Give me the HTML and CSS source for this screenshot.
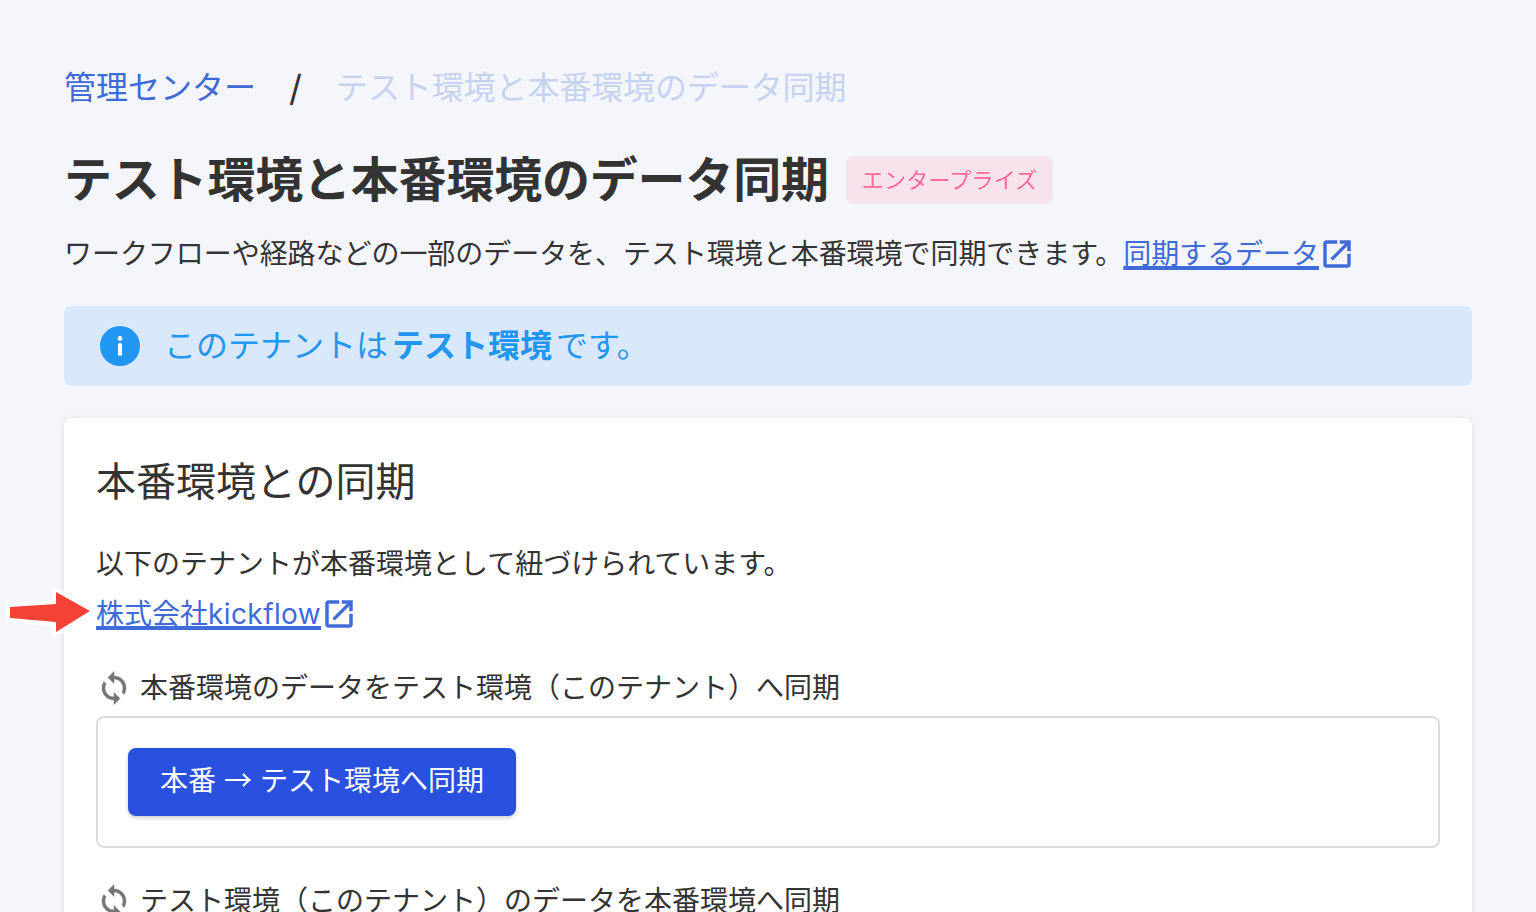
FILE: index.html
```html
<!DOCTYPE html>
<html lang="ja">

<head>
    <meta charset="UTF-8">
    <title>テスト環境と本番環境のデータ同期</title>
    <link rel="stylesheet" href="styles.css">
</head>

<body>
    <div class="container">
        <nav class="breadcrumb">
            <a href="#" class="crumb-link">管理センター</a>
            <span class="crumb-sep">/</span>
            <span class="crumb-current">テスト環境と本番環境のデータ同期</span>
        </nav>

        <div class="title-row">
            <h1>テスト環境と本番環境のデータ同期</h1>
            <span class="badge">エンタープライズ</span>
        </div>

        <p class="lead">ワークフローや経路などの一部のデータを、テスト環境と本番環境で同期できます。<a href="#" class="ext-link"><span class="ext-text">同期するデータ</span><svg class="ext-icon" viewBox="0 0 24 24"><path d="M19 19H5V5h7V3H5a2 2 0 0 0-2 2v14a2 2 0 0 0 2 2h14a2 2 0 0 0 2-2v-7h-2v7zM14 3v2h3.59l-9.83 9.83 1.41 1.41L19 6.41V10h2V3h-7z"/></svg></a></p>

        <div class="alert">
            <svg class="alert-icon" viewBox="0 0 40 40"><circle cx="20" cy="20" r="20" fill="#2196f3"/><circle cx="20" cy="12.5" r="2.4" fill="#fff"/><rect x="18" y="17" width="4" height="13" rx="2" fill="#fff"/></svg>
            <p>このテナントは <strong>テスト環境</strong> です。</p>
        </div>

        <section class="card">
            <h2>本番環境との同期</h2>
            <p class="card-text">以下のテナントが本番環境として紐づけられています。</p>
            <a href="#" class="ext-link tenant-link"><span class="ext-text">株式会社<span class="latin">kickflow</span></span><svg class="ext-icon" viewBox="0 0 24 24"><path d="M19 19H5V5h7V3H5a2 2 0 0 0-2 2v14a2 2 0 0 0 2 2h14a2 2 0 0 0 2-2v-7h-2v7zM14 3v2h3.59l-9.83 9.83 1.41 1.41L19 6.41V10h2V3h-7z"/></svg></a>

            <div class="sync-label">
                <svg class="sync-icon" viewBox="0 0 24 24"><path d="M12 4V1L8 5l4 4V6c3.31 0 6 2.69 6 6 0 1.01-.25 1.97-.7 2.8l1.46 1.46C19.54 15.03 20 13.57 20 12c0-4.42-3.58-8-8-8zm0 14c-3.31 0-6-2.69-6-6 0-1.01.25-1.97.7-2.8L5.24 7.74C4.46 8.97 4 10.43 4 12c0 4.42 3.58 8 8 8v3l4-4-4-4v3z"/></svg>
                <span>本番環境のデータをテスト環境（このテナント）へ同期</span>
            </div>
            <div class="sync-box">
                <button class="btn">本番 → テスト環境へ同期</button>
            </div>

            <div class="sync-label">
                <svg class="sync-icon" viewBox="0 0 24 24"><path d="M12 4V1L8 5l4 4V6c3.31 0 6 2.69 6 6 0 1.01-.25 1.97-.7 2.8l1.46 1.46C19.54 15.03 20 13.57 20 12c0-4.42-3.58-8-8-8zm0 14c-3.31 0-6-2.69-6-6 0-1.01.25-1.97.7-2.8L5.24 7.74C4.46 8.97 4 10.43 4 12c0 4.42 3.58 8 8 8v3l4-4-4-4v3z"/></svg>
                <span>テスト環境（このテナント）のデータを本番環境へ同期</span>
            </div>
        </section>
    </div>

    <svg class="arrow" viewBox="0 0 100 60"><path d="M10 25 L56 22 L56 10 L90 29 L56 50 L56 40 L10 36 Z" fill="#f44336" stroke="#fff" stroke-width="8" paint-order="stroke"/></svg>
</body>

</html>
```

FILE: styles.css
```css
* {
    margin: 0;
    padding: 0;
    box-sizing: border-box;
}

html,
body {
    height: 100%;
    overflow: hidden;
}

body {
    font-family: Inter, "Noto Sans CJK JP", sans-serif;
    color: #333;
    background: #f4f6fb;
    font-size: 28px;
    line-height: 1.5;
}

.container {
    padding: 64px 64px 0;
}

.breadcrumb {
    display: flex;
    align-items: center;
    height: 48px;
    font-size: 32px;
}

.crumb-link {
    color: #3f6ad8;
    text-decoration: none;
}

.crumb-sep {
    margin: 0 34px 0 33px;
    font-size: 36px;
    color: #333;
}

.crumb-current {
    color: #c5d2f0;
    letter-spacing: -0.1px;
}

.title-row {
    display: flex;
    align-items: center;
    margin-top: 40px;
    height: 56px;
}

h1 {
    font-size: 48px;
    font-weight: 700;
    line-height: 56px;
    letter-spacing: -0.2px;
}

.badge {
    margin-left: 17px;
    padding: 0 16px;
    height: 48px;
    line-height: 48px;
    font-size: 22px;
    letter-spacing: 0.2px;
    color: #ff6b9a;
    background: #f6e3ec;
    border-radius: 8px;
}

.lead {
    margin-top: 25px;
    line-height: 42px;
    letter-spacing: -0.05px;
}

.ext-link {
    color: #3f6ad8;
}

.ext-text {
    text-decoration: underline;
    text-decoration-thickness: 2px;
    text-underline-offset: 4px;
}

.latin {
    letter-spacing: 0.4px;
}

.ext-icon {
    width: 36px;
    height: 36px;
    fill: #3f6ad8;
    stroke: #3f6ad8;
    stroke-width: 0.3;
    vertical-align: -8px;
}

.alert {
    display: flex;
    align-items: center;
    height: 80px;
    margin-top: 31px;
    padding: 0 36px;
    background: #d9e8fa;
    border-radius: 8px;
    font-size: 32px;
    word-spacing: -5px;
    color: #2196f3;
}

.alert-icon {
    width: 40px;
    height: 40px;
    margin-right: 24px;
}

.card {
    margin-top: 32px;
    padding: 34px 32px 32px;
    height: 600px;
    background: #fff;
    border-radius: 8px;
    box-shadow: 0 1px 6px rgba(0, 0, 0, 0.1);
}

h2 {
    font-size: 40px;
    font-weight: 400;
    line-height: 60px;
}

.card-text {
    margin-top: 31px;
    line-height: 42px;
}

.tenant-link {
    display: block;
    margin-top: 8px;
    line-height: 42px;
}

.sync-label {
    display: flex;
    align-items: center;
    margin-top: 32px;
    line-height: 42px;
    gap: 8px;
}

.sync-icon {
    width: 36px;
    height: 36px;
    fill: #757575;
    stroke: #757575;
    stroke-width: 0.3;
}

.sync-box {
    margin: 7px 0 1px;
    padding: 30px;
    border: 2px solid #ddd;
    border-radius: 8px;
}

.btn {
    display: block;
    height: 68px;
    padding: 0 32px;
    font: inherit;
    font-family: Roboto, "Noto Sans CJK JP", sans-serif;
    word-spacing: 1px;
    color: #fff;
    background: #2a50e0;
    border: 0;
    border-radius: 8px;
    box-shadow: 0 2px 4px rgba(0, 0, 0, 0.2);
}

.arrow {
    position: absolute;
    left: 0;
    top: 582px;
    width: 100px;
    height: 60px;
}
```
